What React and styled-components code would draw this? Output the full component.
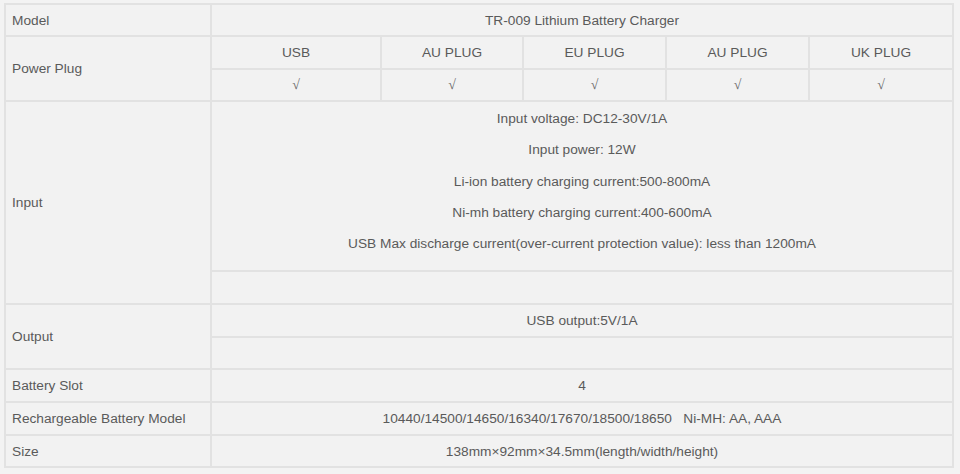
import React from "react";
import styled, { createGlobalStyle } from "styled-components";

const Global = createGlobalStyle`
  html, body { margin: 0; padding: 0; background: #f3f3f3; }
  body { font-family: "Liberation Sans", Arial, sans-serif; }
`;

const Line = "#e2e2e2";

const Sheet = styled.div`
  margin: 3px 0 0 4px;
  width: 950px;
  box-sizing: border-box;
  display: grid;
  grid-template-columns: 206px 170px 142px 143px 143px 144px;
  grid-template-rows: 32px 33px 32px 170px 33px 33px 32px 33px 33px 32px;
  border-top: 2px solid ${Line};
  border-left: 2px solid ${Line};
  background: #f2f2f2;
  color: #5a5a5a;
  font-size: 13.7px;
`;

const Cell = styled.div`
  box-sizing: border-box;
  border-right: 2px solid ${Line};
  border-bottom: 2px solid ${Line};
  display: flex;
  align-items: center;
  justify-content: ${(p) => (p.$label ? "flex-start" : "center")};
  padding-left: ${(p) => (p.$label ? "6px" : "0")};
  grid-column: ${(p) => p.$col || "auto"};
  grid-row: ${(p) => p.$row || "auto"};
  white-space: pre;
`;

const Lines = styled(Cell)`
  flex-direction: column;
  justify-content: flex-start;
  align-items: center;
  padding-top: 1px;
`;

const Para = styled.div`
  height: 31.3px;
  line-height: 31.3px;
`;

const Check = styled.span`
  font-family: "Liberation Serif", "Times New Roman", serif;
  font-size: 14px;
  color: #6a6a6a;
`;

const plugs = ["USB", "AU PLUG", "EU PLUG", "AU PLUG", "UK PLUG"];
const inputs = [
  "Input voltage: DC12-30V/1A",
  "Input power: 12W",
  "Li-ion battery charging current:500-800mA",
  "Ni-mh battery charging current:400-600mA",
  "USB Max discharge current(over-current protection value): less than 1200mA",
];

export default function App() {
  return (
    <>
      <Global />
      <Sheet>
        <Cell $label $col="1" $row="1">Model</Cell>
        <Cell $col="2 / 7" $row="1">TR-009 Lithium Battery Charger</Cell>

        <Cell $label $col="1" $row="2 / 4">Power Plug</Cell>
        {plugs.map((p, i) => (
          <Cell key={"h" + i} $col={String(i + 2)} $row="2">{p}</Cell>
        ))}
        {plugs.map((p, i) => (
          <Cell key={"c" + i} $col={String(i + 2)} $row="3"><Check>√</Check></Cell>
        ))}

        <Cell $label $col="1" $row="4 / 6">Input</Cell>
        <Lines $col="2 / 7" $row="4">
          {inputs.map((t) => (
            <Para key={t}>{t}</Para>
          ))}
        </Lines>
        <Cell $col="2 / 7" $row="5" />

        <Cell $label $col="1" $row="6 / 8">Output</Cell>
        <Cell $col="2 / 7" $row="6">USB output:5V/1A</Cell>
        <Cell $col="2 / 7" $row="7" />

        <Cell $label $col="1" $row="8">Battery Slot</Cell>
        <Cell $col="2 / 7" $row="8">4</Cell>

        <Cell $label $col="1" $row="9">Rechargeable Battery Model</Cell>
        <Cell $col="2 / 7" $row="9">{"10440/14500/14650/16340/17670/18500/18650   Ni-MH: AA, AAA"}</Cell>

        <Cell $label $col="1" $row="10">Size</Cell>
        <Cell $col="2 / 7" $row="10">138mm×92mm×34.5mm(length/width/height)</Cell>
      </Sheet>
    </>
  );
}
